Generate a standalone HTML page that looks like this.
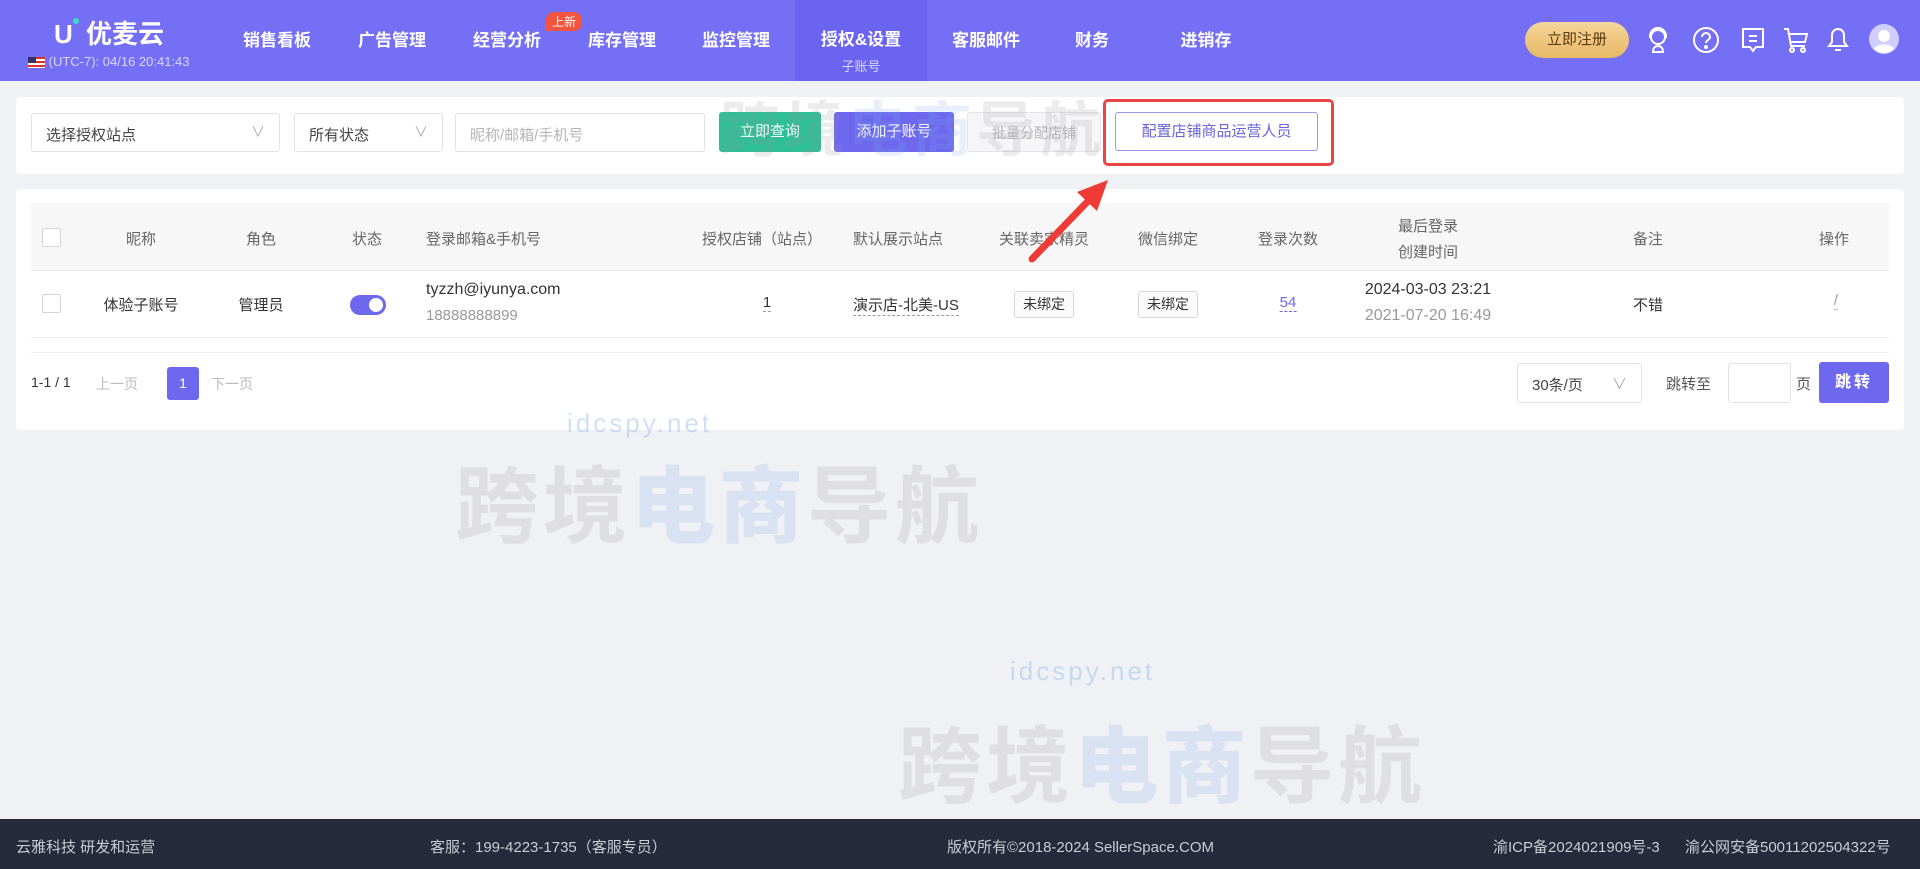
<!DOCTYPE html>
<html><head><meta charset="utf-8"><style>
*{box-sizing:border-box;margin:0;padding:0}
body{width:1920px;height:869px;overflow:hidden;background:#f0f1f5;font-family:"Liberation Sans","Noto Sans CJK SC",sans-serif;font-size:15px;color:#333;position:relative}
.hdr{position:absolute;left:0;top:0;width:1920px;height:81px;background:#746ff4}
.nav{position:absolute;top:26px;color:#fff;font-size:17px;font-weight:bold;transform:translateX(-50%);white-space:nowrap}
.act{position:absolute;left:795px;top:0;width:132px;height:81px;background:#6a64f1}
.card{position:absolute;background:#fff;border-radius:4px}
.sel{position:absolute;top:113px;height:39px;border:1px solid #e2e3e8;border-radius:3px;background:#fff;font-size:15px;padding:10px 14px;color:#444}
.sel .v{position:absolute;right:14px;top:8px;color:#aaa;font-size:14px}
.btn{position:absolute;top:112px;height:40px;border-radius:3px;color:#fff;font-size:15px;text-align:center;line-height:40px}
.th{position:absolute;top:228px;color:#666;font-size:15px;transform:translateX(-50%);white-space:nowrap}
.td{position:absolute;color:#333;font-size:15px;transform:translateX(-50%);white-space:nowrap}
.tag{position:absolute;top:291px;height:27px;border:1px solid #d8d8d8;border-radius:3px;background:#fafafa;font-size:14px;line-height:25px;padding:0 8px;transform:translateX(-50%)}
.ft{position:absolute;top:836px;color:#c9ccd4;font-size:15px;white-space:nowrap}
.wm{position:absolute;font-size:84px;font-weight:bold;color:rgba(150,150,155,.2);letter-spacing:4px;white-space:nowrap}
.wm b{color:rgba(120,170,230,.2)}
.ic{position:absolute;top:26px}
</style></head><body>
<div class="hdr"></div>
<div class="act"></div>
<div style="position:absolute;left:54px;top:14px;color:#fff;font-size:26px;font-weight:bold"><span style="color:#fff">U</span><span style="display:inline-block;width:6px;height:6px;border-radius:3px;background:#3fd8c0;vertical-align:top;margin-top:4px"></span> 优麦云</div>
<div style="position:absolute;left:28px;top:54px;color:#d8d6ff;font-size:13px"><span style="display:inline-block;width:17px;height:11px;background:repeating-linear-gradient(#d33 0 2px,#fff 2px 4px);vertical-align:middle;position:relative"><span style="position:absolute;left:0;top:0;width:8px;height:6px;background:#336"></span></span> (UTC-7): 04/16 20:41:43</div>
<div class="nav" style="left:277px">销售看板</div>
<div class="nav" style="left:392px">广告管理</div>
<div class="nav" style="left:507px">经营分析</div>
<div style="position:absolute;left:546px;top:12px;background:#f2543f;color:#fff;font-size:12px;padding:1px 6px;border-radius:8px 8px 8px 2px">上新</div>
<div class="nav" style="left:622px">库存管理</div>
<div class="nav" style="left:736px">监控管理</div>
<div class="nav" style="left:861px;top:25px">授权&amp;设置</div>
<div style="position:absolute;left:861px;top:56px;color:#d8d6ff;font-size:13px;transform:translateX(-50%)">子账号</div>
<div class="nav" style="left:986px">客服邮件</div>
<div class="nav" style="left:1092px">财务</div>
<div class="nav" style="left:1206px">进销存</div>
<div style="position:absolute;left:1525px;top:22px;width:104px;height:36px;border-radius:18px;background:linear-gradient(#f5d59a,#e8b865);color:#5a3a10;font-size:15px;text-align:center;line-height:36px">立即注册</div>
<svg class="ic" style="left:1645px" width="26" height="28" viewBox="0 0 26 28" fill="none" stroke="#fff" stroke-width="2"><circle cx="13" cy="11" r="7"/><path d="M5 12v-2a8 8 0 0116 0v2M8 26c0-4 2-6 5-6s5 2 5 6z"/></svg>
<svg class="ic" style="left:1692px" width="28" height="28" viewBox="0 0 28 28" fill="none" stroke="#fff" stroke-width="2"><circle cx="14" cy="14" r="12"/><path d="M10 11a4 4 0 118 0c0 3-4 3-4 6"/><circle cx="14" cy="21" r="1" fill="#fff"/></svg>
<svg class="ic" style="left:1740px" width="26" height="28" viewBox="0 0 26 28" fill="none" stroke="#fff" stroke-width="2"><path d="M3 3h20v18h-7l-3 4-3-4H3z M9 10h8M9 15h8"/></svg>
<svg class="ic" style="left:1782px" width="28" height="28" viewBox="0 0 28 28" fill="none" stroke="#fff" stroke-width="2"><path d="M2 3h4l3 17h14M7 8h18l-2 8H9"/><circle cx="10" cy="24" r="2"/><circle cx="21" cy="24" r="2"/></svg>
<svg class="ic" style="left:1826px" width="24" height="28" viewBox="0 0 24 28" fill="none" stroke="#fff" stroke-width="2"><path d="M12 3a6 6 0 016 6v7l3 4H3l3-4V9a6 6 0 016-6zM9 24h6"/></svg>
<svg class="ic" style="left:1869px;top:24px" width="30" height="30" viewBox="0 0 30 30"><circle cx="15" cy="15" r="15" fill="#d0ceff"/><circle cx="15" cy="12" r="6" fill="#fff"/><path d="M5 25c2-6 18-6 20 0a15 15 0 01-20 0z" fill="#fff"/></svg>

<div class="card" style="left:16px;top:97px;width:1888px;height:77px"></div>
<div class="sel" style="left:31px;width:249px">选择授权站点<span class="v">∨</span></div>
<div class="sel" style="left:294px;width:149px">所有状态<span class="v">∨</span></div>
<div class="sel" style="left:455px;width:250px;color:#b5b5b5">昵称/邮箱/手机号</div>
<div class="btn" style="left:719px;width:102px;background:#2fbf97">立即查询</div>
<div class="btn" style="left:834px;width:120px;background:#6e68ef">添加子账号</div>
<div class="btn" style="left:967px;width:134px;background:#f6f6f8;color:#b8b8bc;border:1px solid #e4e4e8;font-size:14px">批量分配店铺</div>
<div class="btn" style="left:1115px;width:203px;background:#fff;color:#6a64d8;border:1px solid #9c98e8;font-size:15px;height:39px;line-height:37px">配置店铺商品运营人员</div>
<div style="position:absolute;left:1103px;top:99px;width:231px;height:67px;border:3px solid #e84545;border-radius:5px"></div>

<div class="card" style="left:16px;top:189px;width:1888px;height:241px"></div>
<div style="position:absolute;left:31px;top:203px;width:1858px;height:68px;background:#f7f7f8;border-bottom:1px solid #ebebee"></div>
<div style="position:absolute;left:31px;top:337px;width:1858px;height:1px;background:#ebebee"></div>
<div style="position:absolute;left:31px;top:352px;width:1858px;height:1px;background:#f0f0f2"></div>
<div style="position:absolute;left:42px;top:228px;width:19px;height:19px;border:1px solid #d6d6da;border-radius:2px;background:#fff"></div>
<div style="position:absolute;left:42px;top:294px;width:19px;height:19px;border:1px solid #d6d6da;border-radius:2px;background:#fff"></div>
<div class="th" style="left:141px">昵称</div>
<div class="th" style="left:261px">角色</div>
<div class="th" style="left:367px">状态</div>
<div class="th" style="left:426px;transform:none">登录邮箱&amp;手机号</div>
<div class="th" style="left:762px">授权店铺（站点）</div>
<div class="th" style="left:853px;transform:none">默认展示站点</div>
<div class="th" style="left:1044px">关联卖家精灵</div>
<div class="th" style="left:1168px">微信绑定</div>
<div class="th" style="left:1288px">登录次数</div>
<div class="th" style="left:1428px;top:215px">最后登录</div>
<div class="th" style="left:1428px;top:241px">创建时间</div>
<div class="th" style="left:1648px">备注</div>
<div class="th" style="left:1834px">操作</div>

<div class="td" style="left:141px;top:294px">体验子账号</div>
<div class="td" style="left:261px;top:294px">管理员</div>
<div style="position:absolute;left:350px;top:295px;width:36px;height:20px;border-radius:10px;background:#6e68ef"><span style="position:absolute;right:3px;top:3px;width:14px;height:14px;border-radius:7px;background:#fff"></span></div>
<div class="td" style="left:426px;top:281px;transform:none;font-size:16px">tyzzh@iyunya.com</div>
<div class="td" style="left:426px;top:307px;transform:none;color:#999">18888888899</div>
<div class="td" style="left:767px;top:294px;border-bottom:1px dashed #999">1</div>
<div class="td" style="left:853px;top:294px;transform:none;border-bottom:1px dashed #999">演示店-北美-US</div>
<div class="tag" style="left:1044px">未绑定</div>
<div class="tag" style="left:1168px">未绑定</div>
<div class="td" style="left:1288px;top:294px;color:#6e68ef;border-bottom:1px dashed #6e68ef">54</div>
<div class="td" style="left:1428px;top:281px;font-size:16px">2024-03-03 23:21</div>
<div class="td" style="left:1428px;top:307px;color:#999;font-size:16px">2021-07-20 16:49</div>
<div class="td" style="left:1648px;top:294px">不错</div>
<div class="td" style="left:1836px;top:292px;color:#999;border-bottom:1px dashed #bbb">/</div>

<div style="position:absolute;left:31px;top:374px;font-size:14px;color:#333">1-1 / 1</div>
<div style="position:absolute;left:96px;top:374px;font-size:14px;color:#bbb">上一页</div>
<div style="position:absolute;left:167px;top:367px;width:32px;height:33px;background:#6e68ef;border-radius:3px;color:#fff;font-size:14px;text-align:center;line-height:33px">1</div>
<div style="position:absolute;left:211px;top:374px;font-size:14px;color:#bbb">下一页</div>
<div style="position:absolute;left:1517px;top:363px;width:125px;height:40px;border:1px solid #e2e3e8;border-radius:3px;font-size:15px;padding:10px 14px;color:#444">30条/页<span style="position:absolute;right:14px;top:9px;color:#aaa">∨</span></div>
<div style="position:absolute;left:1666px;top:373px;font-size:15px;color:#555">跳转至</div>
<div style="position:absolute;left:1728px;top:363px;width:63px;height:40px;border:1px solid #e2e3e8;border-radius:3px"></div>
<div style="position:absolute;left:1796px;top:373px;font-size:15px;color:#555">页</div>
<div style="position:absolute;left:1819px;top:362px;width:70px;height:41px;border-radius:3px;background:#6e68ef;color:#fff;font-size:16px;text-align:center;line-height:41px;font-weight:bold;letter-spacing:3px">跳转</div>

<div class="wm" style="left:455px;top:440px">跨境<b>电商</b>导航</div>
<div class="wm" style="left:898px;top:700px">跨境<b>电商</b>导航</div>
<div style="position:absolute;left:720px;top:82px;font-size:60px;font-weight:bold;color:rgba(150,150,155,.18);letter-spacing:4px">跨境<span style="color:rgba(120,170,230,.18)">电商</span>导航</div>
<div style="position:absolute;left:567px;top:408px;font-size:26px;color:rgba(120,170,230,.35);letter-spacing:3px">idcspy.net</div>
<div style="position:absolute;left:1010px;top:656px;font-size:26px;color:rgba(120,170,230,.35);letter-spacing:3px">idcspy.net</div>

<svg style="position:absolute;left:1020px;top:175px" width="100" height="90" viewBox="0 0 100 90"><path d="M12 84L72 22" stroke="#ee3b36" stroke-width="7" stroke-linecap="round"/><path d="M88 5L57 17 77 36z" fill="#ee3b36"/></svg>

<div style="position:absolute;left:0;top:819px;width:1920px;height:50px;background:#262a3b"></div>
<div class="ft" style="left:16px">云雅科技 研发和运营</div>
<div class="ft" style="left:430px">客服：199-4223-1735（客服专员）</div>
<div class="ft" style="left:947px">版权所有©2018-2024 SellerSpace.COM</div>
<div class="ft" style="left:1493px">渝ICP备2024021909号-3</div>
<div class="ft" style="left:1685px">渝公网安备50011202504322号</div>
</body></html>
